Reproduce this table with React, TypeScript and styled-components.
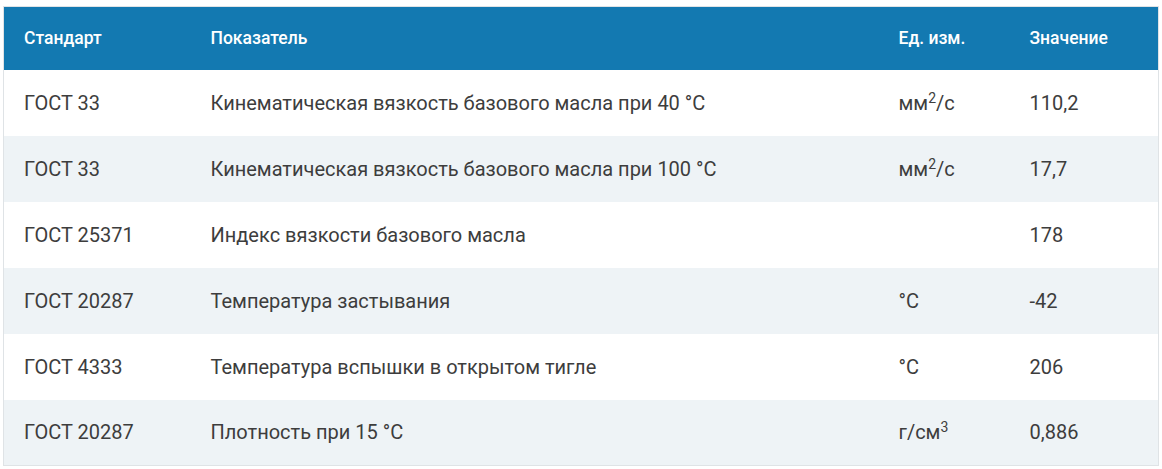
import styled, { createGlobalStyle } from "styled-components";

type Row = {
  standard: string;
  name: string;
  unit: string;
  sup?: string;
  unitTail?: string;
  value: string;
};

const rows: Row[] = [
  { standard: "ГОСТ 33", name: "Кинематическая вязкость базового масла при 40 °C", unit: "мм", sup: "2", unitTail: "/с", value: "110,2" },
  { standard: "ГОСТ 33", name: "Кинематическая вязкость базового масла при 100 °C", unit: "мм", sup: "2", unitTail: "/с", value: "17,7" },
  { standard: "ГОСТ 25371", name: "Индекс вязкости базового масла", unit: "", value: "178" },
  { standard: "ГОСТ 20287", name: "Температура застывания", unit: "°C", value: "-42" },
  { standard: "ГОСТ 4333", name: "Температура вспышки в открытом тигле", unit: "°C", value: "206" },
  { standard: "ГОСТ 20287", name: "Плотность при 15 °C", unit: "г/см", sup: "3", value: "0,886" },
];

const GlobalStyle = createGlobalStyle`
  body {
    margin: 0;
    background: #ffffff;
    font-family: Roboto, "Liberation Sans", sans-serif;
  }
`;

const Wrapper = styled.div`
  padding: 6px 4px 0 3px;
`;

const Table = styled.table`
  width: 1155px;
  border-collapse: collapse;
  border: 1px solid #dfe3e6;
  table-layout: fixed;
`;

const HeadRow = styled.tr`
  background: #1379b1;
  height: 63px;
`;

const Th = styled.th<{ $w: number }>`
  box-sizing: border-box;
  width: ${(p) => p.$w}px;
  padding: 0 20px;
  text-align: left;
  color: #ffffff;
  font-size: 17.5px;
  font-weight: 500;
`;

const BodyRow = styled.tr<{ $striped: boolean }>`
  height: 66px;
  background: ${(p) => (p.$striped ? "#eef3f6" : "#ffffff")};
`;

const Td = styled.td`
  padding: 0 20px;
  color: #3d3d3d;
  font-size: 20px;
  white-space: nowrap;

  sup {
    font-size: 14px;
    line-height: 0;
    vertical-align: 7px;
  }
`;

const App = () => {
  return (
    <Wrapper>
      <GlobalStyle />
      <Table>
        <thead>
          <HeadRow>
            <Th $w={187}>Стандарт</Th>
            <Th $w={688}>Показатель</Th>
            <Th $w={131}>Ед. изм.</Th>
            <Th $w={149}>Значение</Th>
          </HeadRow>
        </thead>
        <tbody>
          {rows.map((r, i) => (
            <BodyRow key={i} $striped={i % 2 === 1}>
              <Td>{r.standard}</Td>
              <Td>{r.name}</Td>
              <Td>
                {r.unit}
                {r.sup && <sup>{r.sup}</sup>}
                {r.unitTail}
              </Td>
              <Td>{r.value}</Td>
            </BodyRow>
          ))}
        </tbody>
      </Table>
    </Wrapper>
  );
};

export default App;
